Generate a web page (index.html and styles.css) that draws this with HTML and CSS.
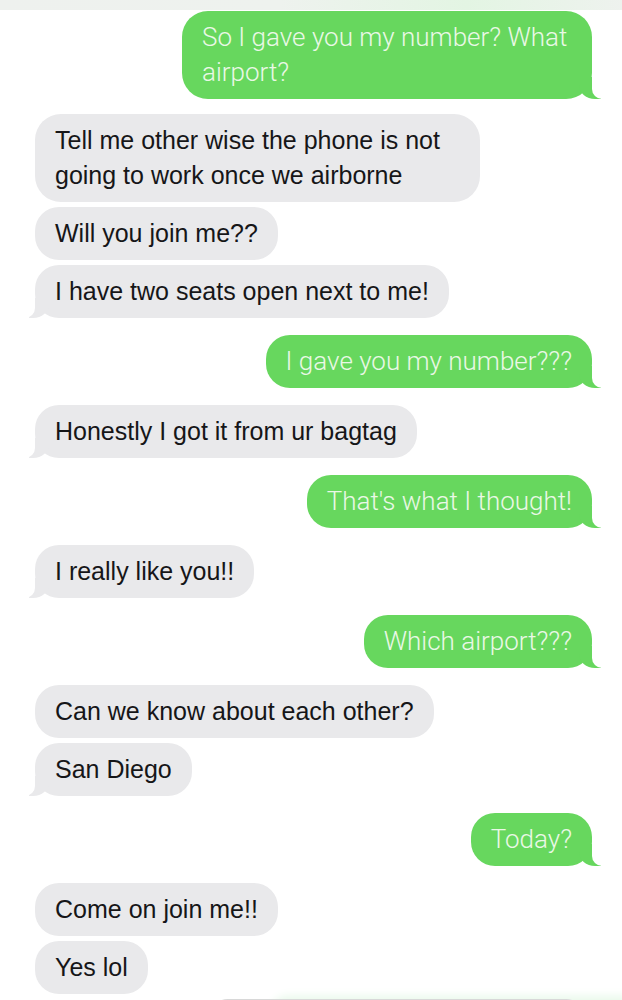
FILE: index.html
```html
<!DOCTYPE html>
<html lang="en">
<head>
<meta charset="utf-8">
<title>Messages</title>
<link rel="stylesheet" href="styles.css">
</head>
<body>
<div class="topband"></div>
<main class="thread">
  <div class="msg out tail two">So I gave you my number? What airport?</div>

  <div class="group">
    <div class="msg in two">Tell me other wise the phone is not going to work once we airborne</div>
    <div class="msg in">Will you join me??</div>
    <div class="msg in tail">I have two seats open next to me!</div>
  </div>

  <div class="msg out tail">I gave you my number???</div>
  <div class="msg in tail">Honestly I got it from ur bagtag</div>
  <div class="msg out tail">That's what I thought!</div>
  <div class="msg in tail">I really like you!!</div>
  <div class="msg out tail">Which airport???</div>

  <div class="group">
    <div class="msg in">Can we know about each other?</div>
    <div class="msg in tail">San Diego</div>
  </div>

  <div class="msg out tail">Today?</div>

  <div class="group">
    <div class="msg in">Come on join me!!</div>
    <div class="msg in">Yes lol</div>
  </div>

  <div class="msg out partial"></div>
</main>
</body>
</html>
```

FILE: styles.css
```css
html, body {
  margin: 0;
  padding: 0;
  background: #ffffff;
}

body {
  width: 622px;
  height: 1000px;
  overflow: hidden;
  font-family: "Liberation Sans", Arial, sans-serif;
}

.topband {
  height: 10px;
  background: linear-gradient(90deg, #eef1ee 0%, #eef2ee 45%, #e3f5e3 75%, #eef2ee 100%);
}

.thread {
  display: flex;
  flex-direction: column;
  gap: 17px;
  padding: 1px 30px 0 35px;
}

.group {
  display: flex;
  flex-direction: column;
  align-items: flex-start;
  gap: 5px;
}

.msg {
  position: relative;
  padding: 9px 20px;
  border-radius: 24px;
  line-height: 35px;
}

.msg.two {
  border-radius: 26px;
}

.in {
  align-self: flex-start;
  max-width: 405px;
  background: #e9e9eb;
  color: #161618;
  font-size: 25px;
}

.out {
  align-self: flex-end;
  max-width: 370px;
  background: #67d75e;
  color: #eaf8e6;
  font-family: Roboto, "Liberation Sans", sans-serif;
  font-weight: 300;
  font-size: 26px;
}

.thread > .msg.out:first-child {
  margin-bottom: -2px;
}

/* tails */
.in.tail::before {
  content: "";
  position: absolute;
  bottom: 0;
  left: -6px;
  width: 20px;
  height: 20px;
  background: #e9e9eb;
  border-bottom-right-radius: 16px 14px;
}

.in.tail::after {
  content: "";
  position: absolute;
  bottom: 0;
  left: -10px;
  width: 10px;
  height: 20px;
  background: #ffffff;
  border-bottom-right-radius: 10px;
}

.out.tail::before {
  content: "";
  position: absolute;
  bottom: 0;
  right: -9px;
  width: 22px;
  height: 22px;
  background: #67d75e;
  border-bottom-left-radius: 16px 14px;
}

.out.tail::after {
  content: "";
  position: absolute;
  bottom: 0;
  right: -14px;
  width: 14px;
  height: 22px;
  background: #ffffff;
  border-bottom-left-radius: 10px;
}

.partial {
  width: 390px;
  height: 30px;
  padding: 0;
  margin-right: 10px;
  margin-top: -12px;
  background: linear-gradient(180deg, #f6f6f6 0%, #ffffff 40%);
  border-top: 1px solid #d8d8d8;
  box-shadow: 60px -3px 10px #e8f9ea;
}
```
